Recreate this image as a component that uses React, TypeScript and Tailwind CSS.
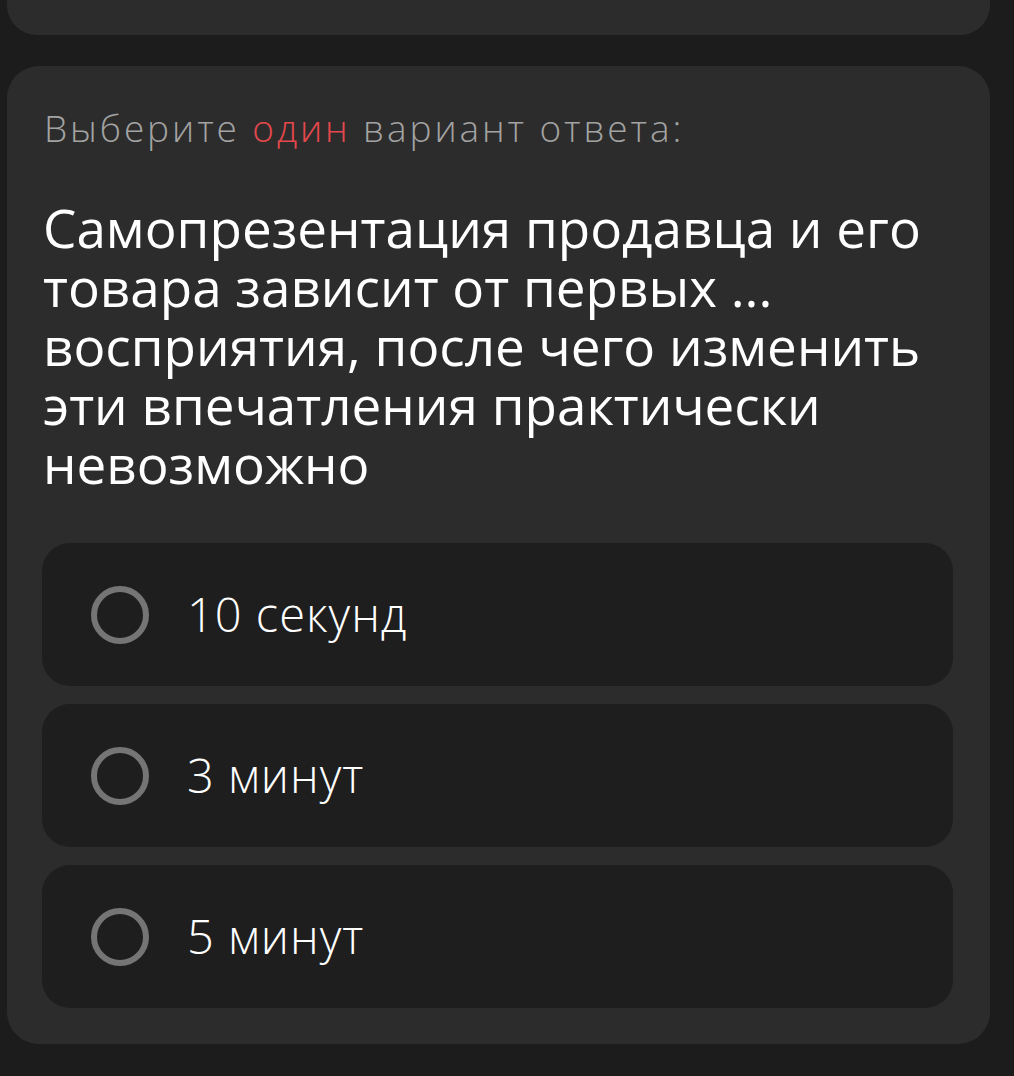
const options = ['10 секунд', '3 минут', '5 минут'];

const lines = [
  'Самопрезентация продавца и его',
  'товара зависит от первых ...',
  'восприятия, после чего изменить',
  'эти впечатления практически',
  'невозможно',
];

const font = { fontFamily: '"Open Sans", "Noto Sans", sans-serif' };

export default function App() {
  return (
    <div className="min-h-[1076px] bg-[#1c1c1c] pb-[31px] pl-[7px] pr-[24px]" style={font}>
      <div className="h-[35px] rounded-b-[30px] bg-[#2c2c2c]" />
      <div className="mt-[31px] rounded-[32px] bg-[#2c2c2c] pb-[36px] pl-[35px] pr-[37px] pt-[40px]">
        <p className="pl-[2px] text-[37px] font-light leading-[44px] tracking-[2.9px] text-[#a3a3a3]">
          Выберите <span className="text-[#e5484d]">один</span> вариант ответа:
        </p>
        <h1 className="mt-[48px] pl-[1px] text-[53px] font-normal leading-[59px] text-white">
          {lines.map((l) => (
            <span key={l} className="block whitespace-nowrap">
              {l}
            </span>
          ))}
        </h1>
        <div className="mt-[50px] flex flex-col gap-[18px]">
          {options.map((o) => (
            <div key={o} className="flex h-[143px] items-center rounded-[28px] bg-[#1e1e1e] pl-[49px]">
              <span className="h-[58px] w-[58px] shrink-0 rounded-full border-[6px] border-[#757575]" />
              <span className="ml-[38px] text-[47px] font-light tracking-[1px] text-white">{o}</span>
            </div>
          ))}
        </div>
      </div>
    </div>
  );
}
